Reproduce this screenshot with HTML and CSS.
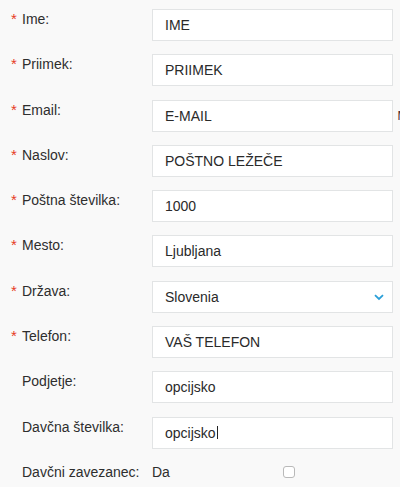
FILE: index.html
```html
<!DOCTYPE html>
<html lang="sl">
<head>
<meta charset="utf-8">
<title>Obrazec</title>
<link rel="stylesheet" href="styles.css">
</head>
<body>
<form class="form">
  <div class="row">
    <div class="label"><span class="req">*</span>Ime:</div>
    <div class="field">IME</div>
  </div>
  <div class="row">
    <div class="label"><span class="req">*</span>Priimek:</div>
    <div class="field">PRIIMEK</div>
  </div>
  <div class="row">
    <div class="label"><span class="req">*</span>Email:</div>
    <div class="field">E-MAIL</div>
    <div class="hint">M</div>
  </div>
  <div class="row">
    <div class="label"><span class="req">*</span>Naslov:</div>
    <div class="field">POŠTNO LEŽEČE</div>
  </div>
  <div class="row">
    <div class="label"><span class="req">*</span>Poštna številka:</div>
    <div class="field">1000</div>
  </div>
  <div class="row">
    <div class="label"><span class="req">*</span>Mesto:</div>
    <div class="field">Ljubljana</div>
  </div>
  <div class="row">
    <div class="label"><span class="req">*</span>Država:</div>
    <div class="field select">
      <span>Slovenia</span>
      <svg class="chev" width="10" height="7" viewBox="0 0 10 7"><path d="M1 1.2 L5 5 L9 1.2" fill="none" stroke="#2a9fd8" stroke-width="1.8"/></svg>
    </div>
  </div>
  <div class="row">
    <div class="label"><span class="req">*</span>Telefon:</div>
    <div class="field">VAŠ TELEFON</div>
  </div>
  <div class="row">
    <div class="label opt">Podjetje:</div>
    <div class="field">opcijsko</div>
  </div>
  <div class="row">
    <div class="label opt">Davčna številka:</div>
    <div class="field">opcijsko<span class="caret"></span></div>
  </div>
  <div class="row last">
    <div class="label opt">Davčni zavezanec:</div>
    <div class="check-value">
      <span>Da</span>
      <span class="checkbox"></span>
    </div>
  </div>
</form>
</body>
</html>
```
FILE: styles.css
```css
html, body {
  margin: 0;
  padding: 0;
}
body {
  width: 400px;
  height: 487px;
  overflow: hidden;
  background: #f9f9f9;
  font-family: "Liberation Sans", Arial, Helvetica, sans-serif;
  font-size: 14px;
  color: #333;
}
.form {
  display: flex;
  flex-direction: column;
  padding-top: 9px;
  margin: 0;
}
.row {
  display: flex;
  align-items: flex-start;
  height: 32px;
  margin-bottom: 13.3px;
  white-space: nowrap;
  overflow: hidden;
}
.label {
  flex: 0 0 auto;
  width: 141px;
  padding-left: 11px;
  padding-top: 2px;
  line-height: 16px;
  color: #2e2e2e;
}
.label.opt {
  width: 130px;
  padding-left: 22px;
}
.req {
  display: inline-block;
  width: 11px;
  font-size: 15px;
  color: #e63b25;
}
.field {
  flex: 0 0 auto;
  box-sizing: border-box;
  width: 241px;
  height: 32px;
  border: 1px solid #e2e4e5;
  background: #fff;
  padding: 0 12px;
  display: flex;
  align-items: center;
  line-height: 16px;
  color: #2a2a2a;
}
.select {
  justify-content: space-between;
  padding-right: 8px;
}
.chev {
  display: block;
  margin-top: 1px;
}
.hint {
  flex: 0 0 auto;
  margin-left: 4.5px;
  align-self: center;
  font-size: 12px;
  color: #4a2a2a;
}
.caret {
  display: inline-block;
  width: 1px;
  height: 13px;
  margin-left: 1px;
  background: #222;
}
.check-value {
  display: flex;
  align-items: center;
  padding-top: 2px;
  line-height: 16px;
  color: #2e2e2e;
}
.checkbox {
  display: inline-block;
  box-sizing: border-box;
  width: 12px;
  height: 12px;
  margin-left: 113px;
  border: 1px solid #b9b9b9;
  border-radius: 3px;
  background: #fff;
}
```
